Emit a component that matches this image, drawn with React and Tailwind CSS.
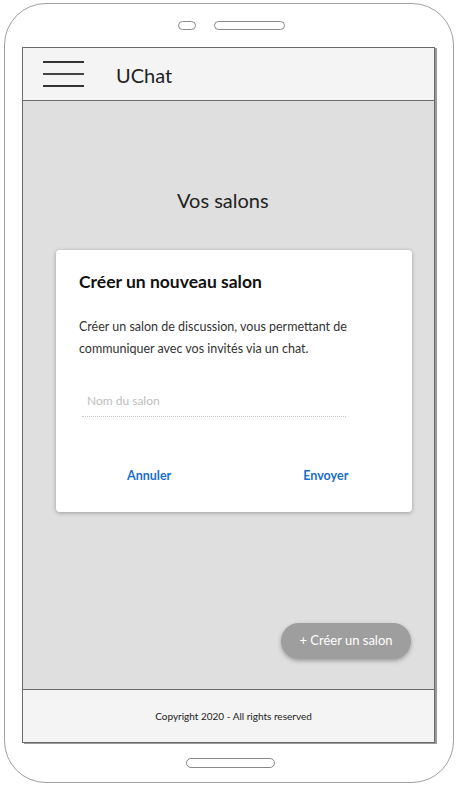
export default function App() {
  return (
    <div
      className="w-[459px] h-[789px] bg-white pt-[3px] pl-[4px]"
      style={{ fontFamily: "Lato, 'Noto Sans', sans-serif" }}
    >
      <div className="w-[450px] h-[780px] border border-[#a0a0a0] rounded-[42px] flex flex-col items-start">
        {/* speaker row */}
        <div className="h-[43px] w-full flex items-center justify-center gap-[18px] pl-[4px]">
          <div className="w-[18px] h-[9px] border border-[#888] rounded-full" />
          <div className="w-[71px] h-[9px] border border-[#888] rounded-full" />
        </div>

        {/* screen */}
        <div className="ml-[17px] w-[413px] flex-1 flex flex-col border border-[#6b6b6b] shadow-[2px_1px_0_#9a9a9a]">
          <header className="h-[53px] bg-[#f4f4f4] border-b border-[#6b6b6b] flex items-center">
            <div className="ml-[20px] w-[41px] flex flex-col gap-[10px]">
              <div className="h-[2px] bg-[#333]" />
              <div className="h-[2px] bg-[#444]" />
              <div className="h-[2px] bg-[#333]" />
            </div>
            <span className="ml-[32px] text-[20px] text-[#222] mt-[1px]">UChat</span>
          </header>

          <main className="flex-1 bg-[#dfdfdf] flex flex-col relative">
            <h1 className="mt-[84px] ml-[154px] text-[20px] text-[#222]">Vos salons</h1>

            <div className="mt-[35px] ml-[33px] w-[356px] h-[262px] bg-white rounded-[4px] shadow-[0_1px_4px_rgba(0,0,0,0.3)] flex flex-col px-[23px]">
              <h2 className="mt-[19px] text-[17.5px] font-bold text-[#111]">Créer un nouveau salon</h2>
              <p className="mt-[21px] text-[12.5px] leading-[22px] text-[#333]">
                Créer un salon de discussion, vous permettant de communiquer avec vos invités via un chat.
              </p>
              <div className="mt-[32px] ml-[3px] w-[264px] border-b border-dotted border-[#c8c8c8] pb-[6px] pl-[5px] text-[12px] text-[#bdbdbd]">
                Nom du salon
              </div>
              <div className="mt-[50px] flex text-[12.5px] font-bold text-[#1a6fc9]">
                <span className="ml-[48px]">Annuler</span>
                <span className="ml-[132px]">Envoyer</span>
              </div>
            </div>

            <button className="absolute right-[23px] bottom-[30px] w-[130px] h-[36px] rounded-full bg-[#9e9e9e] text-white text-[13px] shadow-[0_2px_4px_rgba(0,0,0,0.3)]">
              + Créer un salon
            </button>
          </main>

          <footer className="h-[53px] bg-[#f4f4f4] border-t border-[#6b6b6b] flex items-center justify-center pl-[10px]">
            <span className="text-[10px] text-[#222]">Copyright 2020 - All rights reserved</span>
          </footer>
        </div>

        {/* home button */}
        <div className="h-[39px] w-full flex items-center justify-center pl-[2px]">
          <div className="w-[89px] h-[10px] border border-[#888] rounded-full" />
        </div>
      </div>
    </div>
  );
}
